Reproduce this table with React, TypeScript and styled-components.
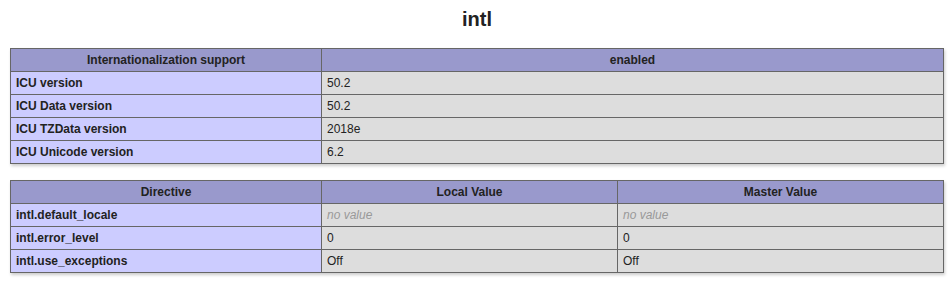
import React from "react";
import styled, { createGlobalStyle } from "styled-components";

const GlobalStyle = createGlobalStyle`
  body {
    margin: 0;
    background: #fff;
    color: #222;
    font-family: "Liberation Sans", Arial, sans-serif;
  }
`;

const Page = styled.div`
  width: 934px;
  margin-left: 10px;
  padding-top: 8px;
  text-align: center;
`;

const Heading = styled.h2`
  font-size: 20px;
  line-height: 23px;
  margin: 0 0 17px;
`;

const Table = styled.table`
  width: 934px;
  border-collapse: collapse;
  table-layout: fixed;
  box-shadow: 1px 2px 3px #ccc;
  margin-bottom: 16px;
  text-align: left;
`;

const Th = styled.th`
  border: 1px solid #666;
  background: #99c;
  font-size: 12px;
  line-height: 14px;
  padding: 4px 5px;
  text-align: center;
  vertical-align: baseline;
  font-weight: bold;
`;

const Name = styled.td`
  border: 1px solid #666;
  background: #ccf;
  font-size: 12px;
  line-height: 14px;
  padding: 4px 5px;
  font-weight: bold;
  vertical-align: baseline;
`;

const Value = styled.td<{ $empty?: boolean }>`
  border: 1px solid #666;
  background: #ddd;
  font-size: 12px;
  line-height: 14px;
  padding: 4px 5px;
  vertical-align: baseline;
  color: ${(p) => (p.$empty ? "#999" : "#222")};
  font-style: ${(p) => (p.$empty ? "italic" : "normal")};
`;

const info = [
  ["ICU version", "50.2"],
  ["ICU Data version", "50.2"],
  ["ICU TZData version", "2018e"],
  ["ICU Unicode version", "6.2"],
];

const directives = [
  ["intl.default_locale", null, null],
  ["intl.error_level", "0", "0"],
  ["intl.use_exceptions", "Off", "Off"],
];

const Cell = ({ v }: { v: string | null }) =>
  v === null ? <Value $empty>no value</Value> : <Value>{v}</Value>;

export default function App() {
  return (
    <>
      <GlobalStyle />
      <Page>
        <Heading>intl</Heading>
        <Table>
          <colgroup>
            <col style={{ width: 311 }} />
            <col />
          </colgroup>
          <thead>
            <tr>
              <Th>Internationalization support</Th>
              <Th>enabled</Th>
            </tr>
          </thead>
          <tbody>
            {info.map(([k, v]) => (
              <tr key={k}>
                <Name>{k}</Name>
                <Value>{v}</Value>
              </tr>
            ))}
          </tbody>
        </Table>
        <Table>
          <colgroup>
            <col style={{ width: 311 }} />
            <col style={{ width: 296 }} />
            <col />
          </colgroup>
          <thead>
            <tr>
              <Th>Directive</Th>
              <Th>Local Value</Th>
              <Th>Master Value</Th>
            </tr>
          </thead>
          <tbody>
            {directives.map(([k, local, master]) => (
              <tr key={k as string}>
                <Name>{k}</Name>
                <Cell v={local} />
                <Cell v={master} />
              </tr>
            ))}
          </tbody>
        </Table>
      </Page>
    </>
  );
}
